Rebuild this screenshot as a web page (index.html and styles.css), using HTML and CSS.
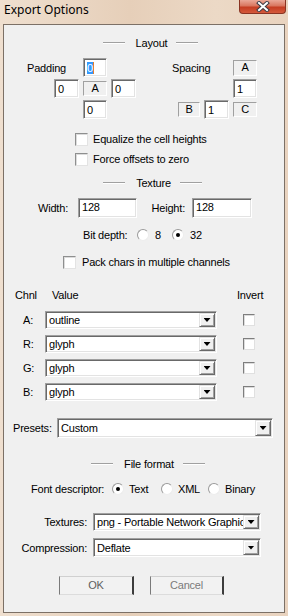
FILE: index.html
```html
<!DOCTYPE html>
<html lang="en">
<head>
    <meta charset="UTF-8">
    <title>Export Options</title>
    <link rel="stylesheet" href="styles.css">
</head>
<body>
    <div class="window">
        <div class="titlebar">
            <span class="title">Export Options</span>
            <div class="close-btn">
                <svg width="14" height="11" viewBox="0 0 14 11">
                    <path d="M3 2 L11 9 M11 2 L3 9" stroke="#3c3c46" stroke-width="4" stroke-linecap="square" fill="none"/>
                    <path d="M3 2 L11 9 M11 2 L3 9" stroke="#ffffff" stroke-width="2" stroke-linecap="square" fill="none"/>
                </svg>
            </div>
        </div>

        <div class="client">
            <div class="section-title layout-title">Layout</div>

            <div class="layout-row">
                <div class="padding-grid">
                    <span class="grid-label">Padding</span>
                    <div class="field pad-top"><span class="selected">0</span></div>
                    <div class="field pad-left">0</div>
                    <div class="static pad-mid">A</div>
                    <div class="field pad-right">0</div>
                    <div class="field pad-bottom">0</div>
                </div>
                <div class="spacing-grid">
                    <span class="grid-label">Spacing</span>
                    <div class="static sp-a">A</div>
                    <div class="field sp-top">1</div>
                    <div class="static sp-b">B</div>
                    <div class="field sp-mid">1</div>
                    <div class="static sp-c">C</div>
                </div>
            </div>

            <div class="check-row equalize-row"><span class="checkbox"></span>Equalize the cell heights</div>
            <div class="check-row force-row"><span class="checkbox"></span>Force offsets to zero</div>

            <div class="section-title texture-title">Texture</div>

            <div class="size-row">
                <span class="size-label width-label">Width:</span>
                <div class="field width-field">128</div>
                <span class="size-label height-label">Height:</span>
                <div class="field height-field">128</div>
            </div>

            <div class="bit-row">
                <span class="bit-label">Bit depth:</span>
                <span class="option bit-8"><span class="radio"></span>8</span>
                <span class="option"><span class="radio checked"></span>32</span>
            </div>

            <div class="check-row pack-row"><span class="checkbox"></span>Pack chars in multiple channels</div>

            <div class="channel-head">
                <span class="head-chnl">Chnl</span>
                <span class="head-value">Value</span>
                <span class="head-invert">Invert</span>
            </div>

            <div class="channels">
                <span class="chnl-label">A:</span>
                <div class="combo"><span class="combo-text">outline</span><span class="combo-btn"></span></div>
                <span class="checkbox invert-box"></span>

                <span class="chnl-label">R:</span>
                <div class="combo"><span class="combo-text">glyph</span><span class="combo-btn"></span></div>
                <span class="checkbox invert-box"></span>

                <span class="chnl-label">G:</span>
                <div class="combo"><span class="combo-text">glyph</span><span class="combo-btn"></span></div>
                <span class="checkbox invert-box"></span>

                <span class="chnl-label">B:</span>
                <div class="combo"><span class="combo-text">glyph</span><span class="combo-btn"></span></div>
                <span class="checkbox invert-box"></span>
            </div>

            <div class="presets-row">
                <span class="presets-label">Presets:</span>
                <div class="combo presets-combo"><span class="combo-text">Custom</span><span class="combo-btn"></span></div>
            </div>

            <div class="section-title format-title">File format</div>

            <div class="descriptor-row">
                <span class="descriptor-label">Font descriptor:</span>
                <span class="option opt-text"><span class="radio checked"></span>Text</span>
                <span class="option opt-xml"><span class="radio"></span>XML</span>
                <span class="option"><span class="radio"></span>Binary</span>
            </div>

            <div class="file-grid">
                <span class="file-label">Textures:</span>
                <div class="combo"><span class="combo-text">png - Portable Network Graphics</span><span class="combo-btn"></span></div>
                <span class="file-label">Compression:</span>
                <div class="combo"><span class="combo-text">Deflate</span><span class="combo-btn"></span></div>
            </div>

            <div class="button-row">
                <div class="button ok-btn">OK</div>
                <div class="button cancel-btn">Cancel</div>
            </div>
        </div>
    </div>
</body>
</html>
```

FILE: styles.css
```css
body {
    margin: 0;
    padding: 0;
    font-family: "Liberation Sans", Arial, sans-serif;
    font-size: 11px;
    letter-spacing: -0.2px;
    color: #000;
}

.window {
    width: 288px;
    height: 616px;
    box-sizing: border-box;
    background: linear-gradient(90deg, #efdfcf 0%, #e6cfb9 45%, #ecd9c6 75%, #e9d3bf 100%);
    display: flex;
    flex-direction: column;
}

.titlebar {
    height: 24px;
    display: flex;
    justify-content: space-between;
    align-items: flex-start;
}

.title {
    font-family: "Noto Sans", "Open Sans", sans-serif;
    font-size: 12px;
    letter-spacing: 0;
    line-height: 18px;
    padding-left: 4px;
    padding-top: 1px;
}

.close-btn {
    width: 47px;
    height: 14px;
    margin-right: 2px;
    box-sizing: border-box;
    border: 1px solid #8a3322;
    border-top: none;
    border-radius: 0 0 4px 4px;
    background: linear-gradient(#eaa897 0%, #d9765f 45%, #c53d22 55%, #d4593c 100%);
    display: flex;
    justify-content: center;
    align-items: center;
}

.client {
    height: 589px;
    margin: 0 3px;
    box-sizing: border-box;
    border: 1px solid #7c7066;
    background-color: #f0f0f0;
    display: flex;
    flex-direction: column;
}

/* etched group headers */
.section-title {
    height: 14px;
    line-height: 14px;
    display: flex;
    justify-content: center;
    align-items: center;
    padding-left: 13px;
}

.section-title::before,
.section-title::after {
    content: "";
    width: 22px;
    border-top: 1px solid #a0a0a0;
    border-bottom: 1px solid #fff;
}

.section-title::before {
    margin-right: 11px;
}

.section-title::after {
    margin-left: 9px;
}

.layout-title {
    margin-top: 11px;
}

.texture-title {
    margin-top: 10px;
    padding-left: 17px;
}

.format-title {
    margin-top: 19px;
    padding-left: 8px;
}

/* sunken edit field */
.field {
    box-sizing: border-box;
    background: #fff;
    border: 1px solid;
    border-color: #a0a0a0 #fff #fff #a0a0a0;
    box-shadow: inset 1px 1px 0 #696969, inset -1px -1px 0 #e3e3e3;
    padding: 2px 3px;
    line-height: 14px;
    white-space: nowrap;
    overflow: hidden;
}

.selected {
    background: #3399ff;
    color: #fff;
    border-right: 1px solid #e08030;
}

.static {
    box-sizing: border-box;
    border: 1px solid;
    border-color: #a0a0a0 #fff #fff #a0a0a0;
    text-align: center;
    line-height: 13px;
    align-self: center;
}

.layout-row {
    display: flex;
    margin-top: 8px;
}

.padding-grid {
    display: grid;
    grid-template-columns: 23px 25px 24px 25px;
    grid-template-rows: 19px 19px 19px;
    column-gap: 4px;
    row-gap: 2px;
    margin-left: 23px;
}

.grid-label {
    grid-column: 1 / 3;
    grid-row: 1;
    align-self: center;
    white-space: nowrap;
}

.pad-top { grid-column: 3; grid-row: 1; }
.pad-left { grid-column: 2; grid-row: 2; }
.pad-mid { grid-column: 3; grid-row: 2; height: 15px; }
.pad-right { grid-column: 4; grid-row: 2; }
.pad-bottom { grid-column: 3; grid-row: 3; }

.spacing-grid {
    display: grid;
    grid-template-columns: 28px 25px 24px;
    grid-template-rows: 19px 19px 19px;
    column-gap: 4px;
    row-gap: 2px;
    margin-left: 36px;
}

.sp-a { grid-column: 3; grid-row: 1; height: 16px; }
.sp-top { grid-column: 3; grid-row: 2; }
.sp-b { grid-column: 1; grid-row: 3; width: 22px; height: 15px; justify-self: end; }
.sp-mid { grid-column: 2; grid-row: 3; }
.sp-c { grid-column: 3; grid-row: 3; height: 15px; }

/* checkboxes and radios */
.checkbox {
    display: inline-block;
    width: 13px;
    height: 13px;
    box-sizing: border-box;
    background: #fff;
    border: 1px solid;
    border-color: #8e8f8f #e3e3e3 #e3e3e3 #8e8f8f;
    box-shadow: inset 1px 1px 0 #dcdcdc;
}

.check-row {
    display: flex;
    align-items: center;
    height: 14px;
    white-space: nowrap;
}

.check-row .checkbox {
    margin-right: 5px;
}

.equalize-row {
    margin-top: 13px;
    margin-left: 71px;
}

.force-row {
    margin-top: 6px;
    margin-left: 71px;
}

.pack-row {
    margin-top: 13px;
    margin-left: 59px;
}

.pack-row .checkbox {
    margin-right: 6px;
}

.radio {
    display: inline-block;
    width: 12px;
    height: 12px;
    box-sizing: border-box;
    border-radius: 50%;
    background: #fff;
    border: 1px solid;
    border-color: #9a9a9a #ececec #ececec #9a9a9a;
    margin-right: 6px;
    position: relative;
}

.radio.checked::after {
    content: "";
    position: absolute;
    left: 3px;
    top: 3px;
    width: 4px;
    height: 4px;
    border-radius: 50%;
    background: #000;
}

.option {
    display: inline-flex;
    align-items: center;
}

/* texture size */
.size-row {
    display: flex;
    align-items: center;
    height: 20px;
    margin-top: 8px;
}

.size-label {
    text-align: right;
}

.width-label {
    width: 64px;
}

.height-label {
    width: 48px;
}

.width-field {
    width: 59px;
    height: 20px;
    margin-left: 10px;
    padding-top: 1px;
}

.height-field {
    width: 60px;
    height: 20px;
    margin-left: 7px;
    padding-top: 1px;
}

.bit-row {
    display: flex;
    align-items: center;
    height: 14px;
    margin-top: 10px;
    margin-left: 79px;
}

.bit-label {
    width: 54px;
}

.bit-8 {
    width: 35px;
}

/* channels */
.channel-head {
    display: grid;
    grid-template-columns: 41px 172px 1fr;
    height: 14px;
    line-height: 14px;
    margin-top: 19px;
}

.head-chnl {
    padding-left: 11px;
}

.head-value {
    padding-left: 7px;
}

.head-invert {
    padding-left: 20px;
}

.channels {
    display: grid;
    grid-template-columns: 41px 172px 1fr;
    grid-auto-rows: 18px;
    row-gap: 6px;
    margin-top: 9px;
}

.chnl-label {
    padding-left: 19px;
    align-self: center;
}

.invert-box {
    margin-left: 26px;
    align-self: center;
    width: 12px;
    height: 12px;
    border-color: #7e7e7e #e0e0e0 #e0e0e0 #7e7e7e;
}

.combo {
    box-sizing: border-box;
    background: #fff;
    border: 1px solid;
    border-color: #a0a0a0 #fff #fff #a0a0a0;
    box-shadow: inset 1px 1px 0 #696969, inset -1px -1px 0 #e3e3e3;
    padding: 1px;
    display: flex;
    align-items: stretch;
}

.combo-text {
    flex: 1;
    padding-left: 2px;
    white-space: nowrap;
    overflow: hidden;
    display: flex;
    align-items: center;
}

.combo-btn {
    width: 16px;
    box-sizing: border-box;
    background: #f0f0f0;
    border: 1px solid;
    border-color: #e3e3e3 #696969 #696969 #e3e3e3;
    box-shadow: inset 1px 1px 0 #fff, inset -1px -1px 0 #a0a0a0;
    display: flex;
    justify-content: center;
    align-items: center;
}

.combo-btn::after {
    content: "";
    width: 7px;
    height: 4px;
    background: #000;
    clip-path: polygon(0 0, 100% 0, 50% 100%);
}

.presets-row {
    display: flex;
    align-items: center;
    height: 20px;
    margin-top: 17px;
    margin-left: 9px;
}

.presets-label {
    width: 44px;
}

.presets-combo {
    width: 216px;
    height: 20px;
}

.descriptor-row {
    display: flex;
    align-items: center;
    height: 14px;
    margin-top: 11px;
    margin-left: 27px;
}

.descriptor-label {
    width: 81px;
}

.descriptor-row .radio {
    margin-right: 5px;
}

.opt-text {
    width: 49px;
}

.opt-xml {
    width: 47px;
}

.file-grid {
    display: grid;
    grid-template-columns: 83px 168px;
    grid-template-rows: 18px 19px;
    column-gap: 6px;
    row-gap: 7px;
    margin-top: 17px;
}

.file-label {
    justify-self: end;
    align-self: center;
}

.button-row {
    display: flex;
    gap: 16px;
    margin-top: 19px;
    margin-left: 55px;
}

.button {
    height: 19px;
    box-sizing: border-box;
    background: #f2f2f2;
    border: 1px solid;
    border-color: #d0d0d0 #3c3c3c #dcdcdc #7a7a7a;
    border-right-width: 2px;
    text-align: center;
    line-height: 16px;
    color: #5e5e5e;
}

.ok-btn {
    width: 75px;
}

.cancel-btn {
    width: 74px;
    color: #7a7a7a;
}
```
